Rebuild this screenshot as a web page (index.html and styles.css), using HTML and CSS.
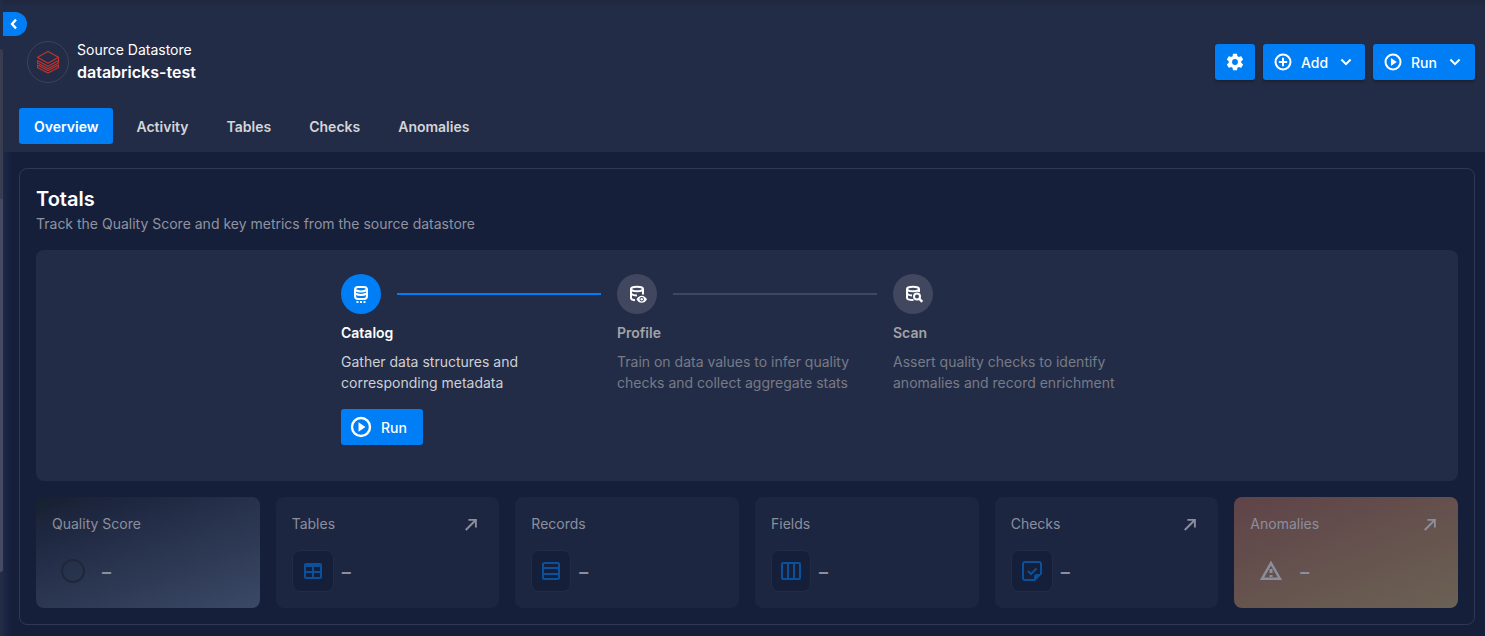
FILE: index.html
```html
<!DOCTYPE html>
<html lang="en">
<head>
<meta charset="utf-8">
<title>databricks-test</title>
<link rel="stylesheet" href="styles.css">
</head>
<body>
<svg class="sprite" aria-hidden="true">
  <symbol id="play" viewBox="0 0 24 24"><circle cx="12" cy="12" r="9" fill="none" stroke="currentColor" stroke-width="2.400"/><path fill="currentColor" d="M9.500 7.200L16.500 12L9.500 16.800Z"/></symbol>
  <symbol id="chevron" viewBox="0 0 24 24"><path fill="none" stroke="currentColor" stroke-width="2.400" d="M6.500 9L12 14.500L17.500 9"/></symbol>
  <symbol id="arrow" viewBox="0 0 24 24"><path fill="none" stroke="currentColor" stroke-width="2.500" d="M5 20L18 7M8.500 6.500H18.500V16.500"/></symbol>
</svg>
<div class="app">
  <div class="rail" aria-hidden="true"><div class="rail-card"></div></div>
  <main class="main">
    <button class="toggle" aria-label="Collapse sidebar"><svg viewBox="0 0 24 24"><path fill="none" stroke="currentColor" stroke-width="4" d="M15.500 4.500L8.500 12L15.500 19.500"/></svg></button>
    <header class="header">
      <div class="header-row">
        <span class="logo"><svg viewBox="0 0 24 24" fill="none" stroke="currentColor" stroke-width="1.100" stroke-linejoin="round"><path d="M3 8.600L1.500 7.300L12 1.400L22.500 7.300L12 13.200L1.500 7.300M1.500 10.500V13L12 18.600L22.500 13V10.500L12 16.300L1.500 10.500M1.500 14.900V17.400L12 23L22.500 17.400V14.900L12 20.600L1.500 14.900M22.500 7.300V10.500"/></svg></span>
        <div class="heading"><p class="kind">Source Datastore</p><h1 class="name">databricks-test</h1></div>
        <div class="actions">
          <button class="btn btn-icon" aria-label="Settings"><svg class="i20" viewBox="0 0 24 24"><path fill="currentColor" d="M12,15.5A3.5,3.5 0 0,1 8.5,12A3.5,3.5 0 0,1 12,8.5A3.5,3.5 0 0,1 15.5,12A3.5,3.5 0 0,1 12,15.5M19.43,12.97C19.47,12.65 19.5,12.33 19.5,12C19.5,11.67 19.47,11.34 19.43,11L21.54,9.37C21.73,9.22 21.78,8.95 21.66,8.73L19.66,5.27C19.54,5.05 19.27,4.96 19.05,5.05L16.56,6.05C16.04,5.66 15.5,5.32 14.87,5.07L14.5,2.42C14.46,2.18 14.25,2 14,2H10C9.75,2 9.54,2.18 9.5,2.42L9.13,5.07C8.5,5.32 7.96,5.66 7.44,6.05L4.95,5.05C4.73,4.96 4.46,5.05 4.34,5.27L2.34,8.73C2.21,8.95 2.27,9.22 2.46,9.37L4.57,11C4.53,11.34 4.5,11.67 4.5,12C4.5,12.33 4.53,12.65 4.57,12.97L2.46,14.63C2.27,14.78 2.21,15.05 2.34,15.27L4.34,18.73C4.46,18.95 4.73,19.03 4.95,18.95L7.44,17.94C7.96,18.34 8.5,18.68 9.13,18.93L9.5,21.58C9.54,21.82 9.75,22 10,22H14C14.25,22 14.46,21.82 14.5,21.58L14.87,18.93C15.5,18.67 16.04,18.34 16.56,17.94L19.05,18.95C19.27,19.03 19.54,18.95 19.66,18.73L21.66,15.27C21.78,15.05 21.73,14.78 21.54,14.63L19.43,12.97Z"/></svg></button>
          <button class="btn btn-menu"><svg class="i20" viewBox="0 0 24 24" fill="none" stroke="currentColor" stroke-width="2.400"><circle cx="12" cy="12" r="9"/><path d="M12 7V17M7 12H17"/></svg>Add<svg class="i20 caret"><use href="#chevron"/></svg></button>
          <button class="btn btn-menu"><svg class="i20"><use href="#play"/></svg>Run<svg class="i20 caret"><use href="#chevron"/></svg></button>
        </div>
      </div>
      <nav class="tabs">
        <a class="tab active" href="#overview" aria-current="page">Overview</a>
        <a class="tab" href="#activity">Activity</a>
        <a class="tab" href="#tables">Tables</a>
        <a class="tab" href="#checks">Checks</a>
        <a class="tab" href="#anomalies">Anomalies</a>
      </nav>
    </header>
    <section class="totals">
      <h2 class="totals-title">Totals</h2>
      <p class="totals-sub">Track the Quality Score and key metrics from the source datastore</p>
      <div class="steps-panel">
        <ol class="steps">
          <li class="step current">
            <div class="track"><span class="dot"><svg class="i20" viewBox="0 0 20 20" fill="none" stroke="currentColor" stroke-width="2"><rect x="4" y="3" width="12" height="12" rx="3"/><path d="M4 6Q10 9 16 6M4 9.500Q10 12.500 16 9.500"/><path d="M5.500 18h2M9 18h2M12.500 18h2"/></svg></span><span class="line"></span></div>
            <h3 class="step-title">Catalog</h3>
            <p class="step-text">Gather data structures and<br>corresponding metadata</p>
            <button class="btn btn-run"><svg class="i24"><use href="#play"/></svg>Run</button>
          </li>
          <li class="step">
            <div class="track"><span class="dot"><svg class="i20" viewBox="0 0 20 20" fill="none" stroke="currentColor" stroke-width="2"><ellipse cx="10" cy="5" rx="6" ry="2.300"/><path d="M4 5V14Q4 15.800 8 16.200M16 5V10.500M4 9.500Q5.500 11.500 10 11.500"/><path fill="currentColor" stroke="none" fill-rule="evenodd" d="M9.500 15.200Q11.500 11.700 14.700 11.700T20 15.200Q18 18.700 14.700 18.700T9.500 15.200ZM14.700 13A2.200 2.200 0 1 0 14.700 17.400A2.200 2.200 0 1 0 14.700 13Z"/><circle cx="14.700" cy="15.200" r="1.200" fill="currentColor" stroke="none"/></svg></span><span class="line"></span></div>
            <h3 class="step-title">Profile</h3>
            <p class="step-text">Train on data values to infer quality<br>checks and collect aggregate stats</p>
          </li>
          <li class="step">
            <div class="track"><span class="dot"><svg class="i20" viewBox="0 0 20 20" fill="none" stroke="currentColor" stroke-width="2"><ellipse cx="10" cy="5" rx="6" ry="2.300"/><path d="M4 5V14Q4 16 10.500 16M16 5V8M4 9.500Q5.500 11.500 9 11.500"/><circle cx="14" cy="12.500" r="3"/><path stroke-width="2.400" d="M16 14.500L19.300 17.800"/></svg></span></div>
            <h3 class="step-title">Scan</h3>
            <p class="step-text">Assert quality checks to identify<br>anomalies and record enrichment</p>
          </li>
        </ol>
      </div>
      <div class="cards">
        <article class="card quality">
          <div class="card-head">Quality Score</div>
          <div class="card-body"><span class="badge plain"><span class="ring"></span></span><span class="value">–</span></div>
        </article>
        <article class="card">
          <div class="card-head">Tables<svg class="i18"><use href="#arrow"/></svg></div>
          <div class="card-body"><span class="badge"><svg class="i24" viewBox="0 0 24 24"><path fill="currentColor" fill-rule="evenodd" d="M5 4H19A2 2 0 0 1 21 6V18A2 2 0 0 1 19 20H5A2 2 0 0 1 3 18V6A2 2 0 0 1 5 4ZM5 8V12H11V8ZM13 8V12H19V8ZM5 14V18H11V14ZM13 14V18H19V14Z"/></svg></span><span class="value">–</span></div>
        </article>
        <article class="card">
          <div class="card-head">Records</div>
          <div class="card-body"><span class="badge narrow"><svg class="i24" viewBox="0 0 24 24" fill="none" stroke="currentColor" stroke-width="2"><rect x="4" y="4" width="16" height="16" rx="1"/><path d="M4 9H20M4 15H20"/></svg></span><span class="value">–</span></div>
        </article>
        <article class="card">
          <div class="card-head">Fields</div>
          <div class="card-body"><span class="badge narrow"><svg class="i24" viewBox="0 0 24 24" fill="none" stroke="currentColor" stroke-width="2"><rect x="3" y="4" width="18" height="16" rx="1"/><path d="M9 4V20M15 4V20"/></svg></span><span class="value">–</span></div>
        </article>
        <article class="card">
          <div class="card-head">Checks<svg class="i18"><use href="#arrow"/></svg></div>
          <div class="card-body"><span class="badge"><svg class="i24" viewBox="0 0 24 24" fill="none" stroke="currentColor" stroke-width="2"><path d="M15 21H5A2 2 0 0 1 3 19V5A2 2 0 0 1 5 3H19A2 2 0 0 1 21 5V15"/><path d="M8 12L11 15L16.500 9.500"/><path fill="currentColor" stroke="none" d="M14 22V18A3 3 0 0 1 17 15H22L15 22Z"/></svg></span><span class="value">–</span></div>
        </article>
        <article class="card anomalies">
          <div class="card-head">Anomalies<svg class="i18"><use href="#arrow"/></svg></div>
          <div class="card-body"><span class="badge plain"><svg class="i24" viewBox="0 0 24 24"><path fill="none" stroke="currentColor" stroke-width="2.400" d="M12 4L21 19.800H3Z"/><path fill="currentColor" d="M10.500 10H13.500V14H10.500ZM10.500 16H13.500V18H10.500Z"/></svg></span><span class="value">–</span></div>
        </article>
      </div>
    </section>
  </main>
</div>
</body>
</html>
```
FILE: styles.css
```css
* { box-sizing: border-box; }
body {
  margin: 0;
  background: #161f3a;
  color: #fff;
  font: 14px/21px Inter, "Liberation Sans", sans-serif;
}
h1, h2, h3, p, ol { margin: 0; padding: 0; }
button { border: 0; font: inherit; color: inherit; cursor: pointer; }
svg { display: block; flex: none; }
.sprite { position: absolute; width: 0; height: 0; }
.i18 { width: 18px; height: 18px; }
.i20 { width: 20px; height: 20px; }
.i24 { width: 24px; height: 24px; }

.app { display: flex; min-height: 100vh; }
.rail { flex: none; width: 3px; padding: 49px 0 64px; background: #232c46; }
.rail-card {
  height: 100%;
  border-radius: 0 4px 4px 0;
  background: linear-gradient(#393d50 150px, #454b63 150px);
}
.main {
  position: relative;
  flex: 1;
  min-width: 0;
  padding-bottom: 11px;
  background: linear-gradient(90deg, #1c294b, #161f3a 8px);
}
.toggle {
  position: absolute;
  left: 0;
  top: 12px;
  width: 24px;
  height: 24px;
  padding: 0 0 0 4px;
  border-radius: 0 12px 12px 0;
  background: #007ef5;
}
.toggle svg { width: 14px; height: 14px; }

.header {
  padding: 40px 10px 8px 16px;
  background: linear-gradient(#1f2740, #232c46 8px);
}
.header-row { display: flex; align-items: center; height: 44px; margin-bottom: 24px; padding-left: 8px; }
.logo {
  display: grid;
  place-items: center;
  width: 42px;
  height: 42px;
  margin-right: 8px;
  border: 1px solid #3b435b;
  border-radius: 50%;
  color: #c0342e;
}
.logo svg { width: 24px; height: 24px; }
.heading { padding-bottom: 2px; line-height: 22px; }
.kind { font-size: 14px; }
.name { font-size: 16px; line-height: 22px; font-weight: 600; }
.actions { display: flex; gap: 8px; margin-left: auto; }
.btn {
  display: flex;
  align-items: center;
  height: 36px;
  padding: 0 10px;
  border-radius: 3px;
  background: #007ef5;
  font-weight: 500;
  box-shadow: 0 2px 3px rgba(0, 0, 0, 0.25);
}
.btn-icon { width: 40px; }
.btn-menu { width: 102px; gap: 8px; }
.caret { margin-left: auto; }

.tabs { display: flex; gap: 8px; }
.tab {
  padding: 1px 15px 0;
  border-radius: 3px;
  line-height: 35px;
  font-weight: 600;
  color: #d3d5da;
  text-decoration: none;
}
.tab.active { background: #007ef5; color: #fff; }

.totals {
  margin: 16px 10px 0 16px;
  padding: 16px;
  border: 1px solid #2f3852;
  border-radius: 8px;
}
.totals-title { font-size: 20px; line-height: 28px; font-weight: 600; }
.totals-sub { margin-bottom: 16px; color: #8f93a0; }
.steps-panel {
  padding: 24px 24px 36px;
  border-radius: 8px;
  background: #232c46;
}
.steps { display: flex; justify-content: center; gap: 16px; list-style: none; }
.step { flex: 0 1 260px; }
.track { display: flex; align-items: center; gap: 16px; margin-bottom: 8px; }
.dot {
  display: grid;
  place-items: center;
  flex: none;
  width: 40px;
  height: 40px;
  border-radius: 50%;
  background: #40475e;
}
.line { flex: 1; height: 2px; background: #40475e; }
.step-title { margin-bottom: 7px; font-size: 14px; line-height: 22px; font-weight: 600; color: #a2a3a7; }
.step-text { color: #767b87; }
.current .dot, .current .line { background: #007ef5; }
.current .step-title { color: #fff; }
.current .step-text { color: #cdd0d6; }
.btn-run { width: 82px; margin-top: 16px; padding: 0 8px; gap: 8px; box-shadow: none; }

.cards { display: grid; grid-template-columns: repeat(6, 1fr); gap: 16px; margin-top: 16px; }
.card { padding: 16px; border-radius: 8px; background: #1d2640; color: #8b8f9d; }
.quality { background: linear-gradient(160deg, #17202f, #1e2740 20%, #3b4966); }
.anomalies { background: linear-gradient(160deg, #5f4348, #6b6154); }
.card-head { display: flex; align-items: center; justify-content: space-between; padding-right: 3px; margin-bottom: 16px; }
.card-body { display: flex; align-items: center; gap: 8px; }
.badge {
  display: grid;
  place-items: center;
  width: 42px;
  height: 42px;
  border: 1px solid #232c45;
  border-radius: 8px;
  background: #161f3a;
  color: #0b509b;
}
.badge.narrow { width: 40px; }
.badge.plain { border-color: transparent; background: none; color: #8b8f9d; }
.ring { width: 24px; height: 24px; border: 2px solid #1f273a; border-radius: 50%; }
.value { font-size: 18px; font-weight: 700; }
```
